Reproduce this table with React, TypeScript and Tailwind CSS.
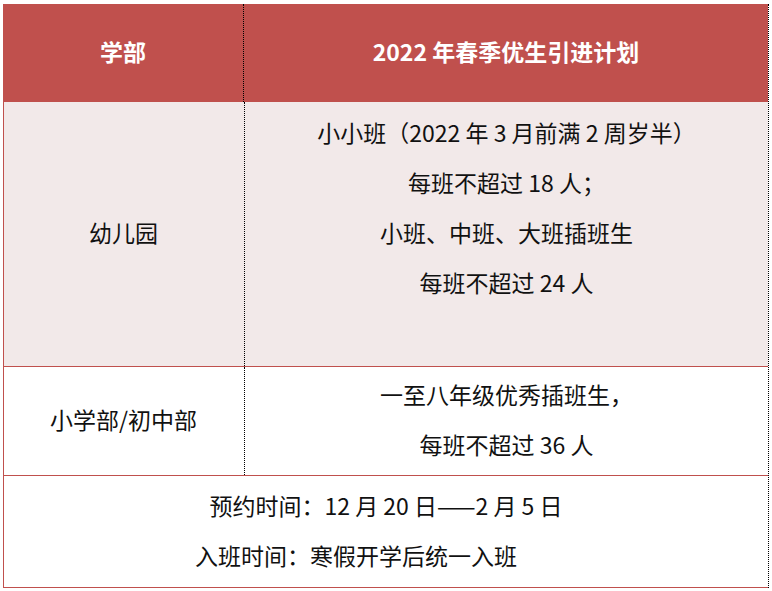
const font = { fontFamily: '"Microsoft YaHei", "Noto Sans CJK SC", "Noto Sans", sans-serif' };

function Cell({ lines, className = '' }: { lines: string[]; className?: string }) {
  return (
    <div className={`flex flex-col items-center justify-center text-center pb-[4px] ${className}`}>
      {lines.map((l, i) => (
        <div key={i} className="h-[50px] leading-[50px] whitespace-nowrap">
          {l || '\u00a0'}
        </div>
      ))}
    </div>
  );
}

export default function App() {
  return (
    <div className="bg-white w-[772px] h-[591px] pl-[3px] pt-[4px]" style={font}>
      <div className="w-[766px] border-r border-dotted border-black text-[23px] text-[#111]">
        {/* header */}
        <div className="grid grid-cols-[240px_1fr] h-[98px] bg-[#c0504d] text-white font-bold">
          <div className="flex items-center justify-center pb-[4px]">学部</div>
          <div className="flex items-center justify-center pb-[4px] border-l border-dotted border-black">
            2022 年春季优生引进计划
          </div>
        </div>

        {/* kindergarten */}
        <div className="grid grid-cols-[240px_1fr] h-[265px] bg-[#f2e9e9] border-l border-b border-[#c0504d]">
          <div className="flex items-center justify-center pb-[4px] -ml-px">幼儿园</div>
          <div className="border-l border-dotted border-black">
            <Cell
              className="h-full"
              lines={['小小班（2022 年 3 月前满 2 周岁半）', '每班不超过 18 人；', '小班、中班、大班插班生', '每班不超过 24 人', '']}
            />
          </div>
        </div>

        {/* primary / middle */}
        <div className="grid grid-cols-[240px_1fr] h-[109px] border-l border-b border-[#c0504d]">
          <div className="flex items-center justify-center pb-[4px] -ml-px">小学部/初中部</div>
          <div className="border-l border-dotted border-black">
            <Cell className="h-full" lines={['一至八年级优秀插班生，', '每班不超过 36 人']} />
          </div>
        </div>

        {/* footer */}
        <div className="h-[112px] pb-[4px] border-l border-b border-[#c0504d] flex flex-col items-center justify-center">
          <div className="h-[50px] leading-[50px] whitespace-nowrap">预约时间：12 月 20 日——2 月 5 日</div>
          <div className="h-[50px] leading-[50px] whitespace-nowrap pr-[60px]">入班时间：寒假开学后统一入班</div>
        </div>
      </div>
    </div>
  );
}
